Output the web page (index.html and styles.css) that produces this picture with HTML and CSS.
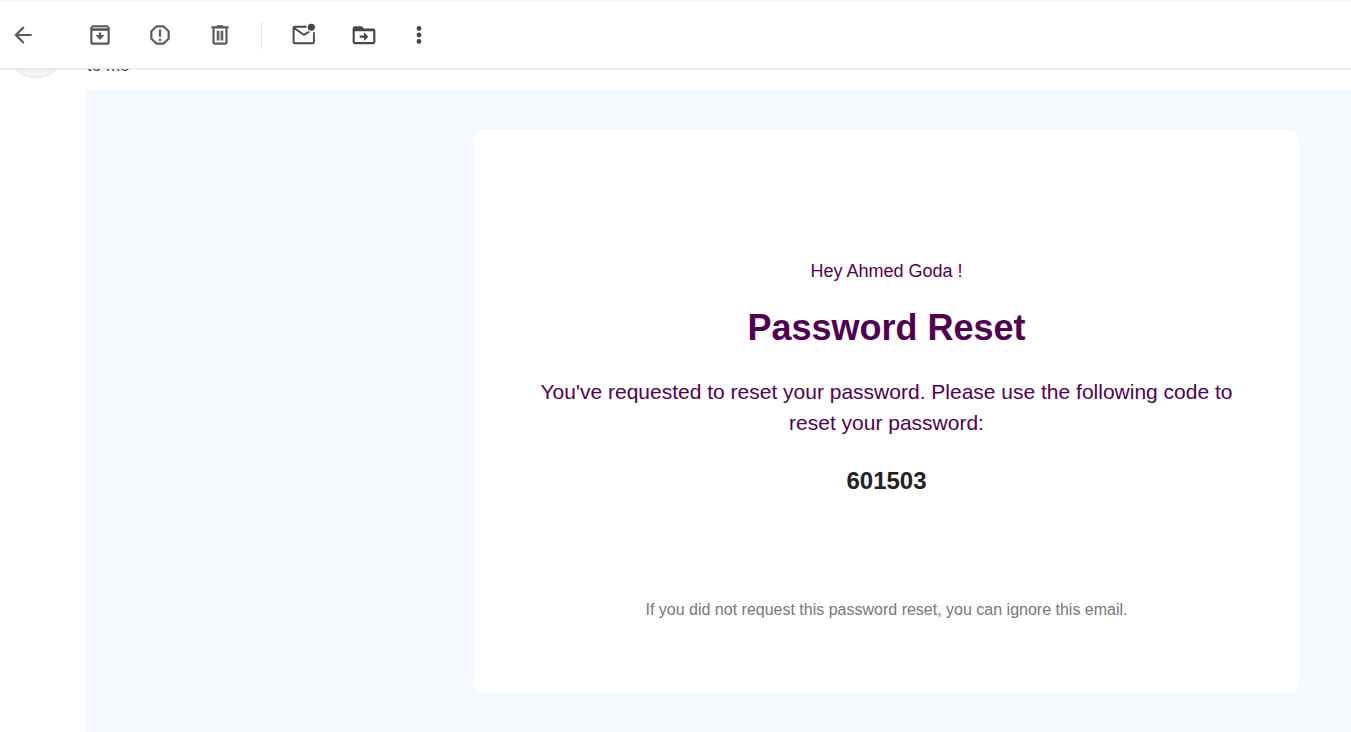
FILE: index.html
```html
<!DOCTYPE html>
<html lang="en">
<head>
<meta charset="utf-8">
<meta name="viewport" content="width=device-width, initial-scale=1">
<title>Password Reset</title>
<link rel="stylesheet" href="styles.css">
</head>
<body>
<header class="toolbar">
  <button class="tool tool-back" aria-label="Back"><svg viewBox="0 0 24 24"><path d="M20 11H7.83l5.59-5.59L12 4l-8 8 8 8 1.41-1.41L7.83 13H20z"/></svg></button>
  <div class="tool-group">
    <button class="tool" aria-label="Archive"><svg viewBox="0 0 24 24"><path fill-opacity=".55" d="M5 5h14v3H5z"/><path fill-rule="evenodd" d="M5 3h14l2 2v14a2 2 0 0 1-2 2H5a2 2 0 0 1-2-2V5zm.8 1.7L4.9 6h14.2l-.9-1.3zM5 8v11h14V8zM11 9.8h2V12h3.200l-4.200 4.500L7.800 12H11z"/></svg></button>
    <button class="tool" aria-label="Report spam"><svg viewBox="0 0 24 24"><path fill-rule="evenodd" d="M15.73 3H8.27L3 8.27v7.46L8.27 21h7.46L21 15.73V8.27zM19 14.9 14.9 19H9.1L5 14.9V9.1L9.1 5h5.8L19 9.1zM11 7h2v6.5h-2zM11 15.500h2v2h-2z"/></svg></button>
    <button class="tool" aria-label="Delete"><svg viewBox="0 0 24 24"><path fill-rule="evenodd" d="M15 4V3H9v1H4v2h1v13a2 2 0 0 0 2 2h10a2 2 0 0 0 2-2V6h1V4zm2 15H7V6h10zM9 8h2v9H9zM13 8h2v9h-2z"/><path fill-opacity=".4" d="M11 8h2v9h-2z"/></svg></button>
  </div>
  <div class="tool-group tool-group-divided">
    <button class="tool" aria-label="Mark as unread"><svg viewBox="0 0 24 24"><path d="M22 9v9.500a2 2 0 0 1-2 2H3.500a2 2 0 0 1-2-2V5.500a2 2 0 0 1 2-2h11a5 5 0 0 0-.1 1.700H4l8 5.700 4-2.700 1.500 1.200L12 13 3.300 7v11.700h17V9.600z"/><circle cx="18.800" cy="4.800" r="3.300"/></svg></button>
    <button class="tool" aria-label="Move to"><svg viewBox="0 0 24 24"><path fill-rule="evenodd" d="M20.500 6H12l-2-2H3.500a2 2 0 0 0-2 2v12.500a2 2 0 0 0 2 2h17a2 2 0 0 0 2-2V8a2 2 0 0 0-2-2zm0 12.500h-17V8.500h17zM12 17.500l4-4-4-4v3H8v2h4z"/></svg></button>
    <button class="tool tool-narrow" aria-label="More"><svg viewBox="0 0 24 24"><circle cx="12" cy="6" r="2.200"/><circle cx="12" cy="12" r="2.200"/><circle cx="12" cy="18" r="2.200"/></svg></button>
  </div>
</header>
<main class="message">
  <div class="sender">
    <span class="avatar"></span>
    <span class="recipient">to me</span>
  </div>
  <div class="mail-body">
    <article class="card">
      <p class="greeting">Hey Ahmed Goda !</p>
      <h1 class="title">Password Reset</h1>
      <p class="lead">You've requested to reset your password. Please use the following code to reset your password:</p>
      <p class="code">601503</p>
      <p class="note">If you did not request this password reset, you can ignore this email.</p>
    </article>
  </div>
</main>
</body>
</html>
```
FILE: styles.css
```css
* { box-sizing: border-box; }

body {
  margin: 0;
  min-height: 100vh;
  display: flex;
  flex-direction: column;
  background: #fff;
  color: #222;
  font-family: "Liberation Sans", Arial, sans-serif;
}

.toolbar {
  position: sticky;
  top: 0;
  z-index: 1;
  display: flex;
  align-items: center;
  height: 69px;
  background: #fff;
  border-top: 2px solid #f6f8fc;
  border-bottom: 1px solid #e8e8e8;
  box-shadow: 0 1px 2px rgba(0, 0, 0, .06);
}

.tool {
  display: flex;
  justify-content: center;
  width: 60px;
  padding: 0;
  border: 0;
  background: none;
  color: #5a5a5a;
}

.tool svg {
  width: 26px;
  height: 26px;
  fill: currentColor;
}

.tool-back { width: 46px; }

.tool-group {
  display: flex;
  padding-left: 24px;
}

.tool-group-divided {
  align-items: center;
  height: 27px;
  margin-left: 11px;
  padding-left: 12px;
  border-left: 1px solid #e4e4e4;
}

.tool-group-divided .tool { color: #484848; }
.tool-group-divided .tool-narrow { width: 50px; }

.message {
  flex: 1;
  display: flex;
  flex-direction: column;
  margin-top: -51px;
}

.sender {
  display: flex;
  align-items: flex-end;
  gap: 21px;
  padding: 0 0 11px 6px;
}

.avatar {
  width: 60px;
  height: 60px;
  border: 1px solid #e2e2e2;
  border-radius: 50%;
  background: #f3f3f3;
}

.recipient {
  padding-bottom: 2px;
  font-size: 17px;
  line-height: 20px;
  color: #444;
}

.mail-body {
  flex: 1;
  margin-left: 86px;
  padding: 41px 52px 39px;
  background: #f3f9fd;
}

.card {
  max-width: 825px;
  margin-left: auto;
  padding: 128px 64px 70px;
  border-radius: 10px;
  background: #fff;
  color: #500050;
  text-align: center;
}

.card > * { margin: 0; }

.greeting {
  font-size: 18px;
  line-height: 26px;
}

.card .title {
  margin-top: 22px;
  font-size: 36px;
  line-height: 44px;
}

.card .lead {
  margin-top: 26px;
  font-size: 21px;
  line-height: 31px;
}

.card .code {
  margin-top: 28px;
  color: #222;
  font-size: 24px;
  font-weight: bold;
  line-height: 30px;
}

.card .note {
  margin-top: 101px;
  color: #777;
  font-size: 16px;
  line-height: 26px;
}
```
